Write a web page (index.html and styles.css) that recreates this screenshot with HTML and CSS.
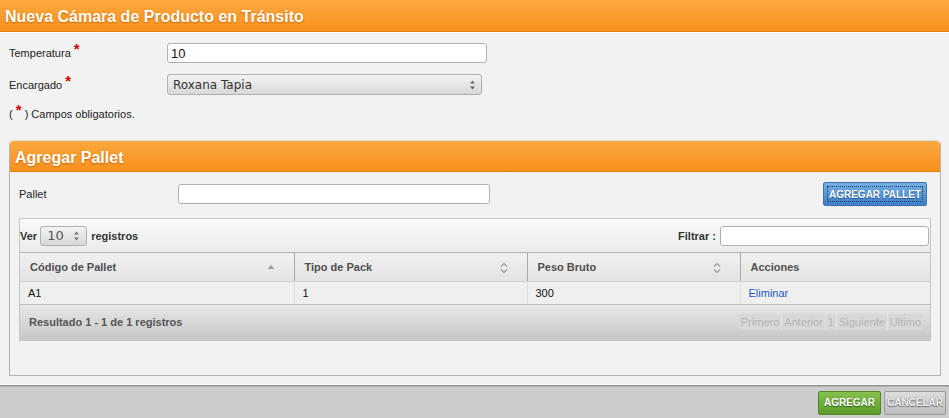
FILE: index.html
```html
<!DOCTYPE html>
<html lang="es">
<head>
<meta charset="utf-8">
<title>Nueva Cámara de Producto en Tránsito</title>
<link rel="stylesheet" href="styles.css">
</head>
<body>
<header class="top-bar"><h1>Nueva Cámara de Producto en Tránsito</h1></header>
<main class="content">
  <div class="fields">
    <label class="lbl">Temperatura <span class="req">*</span></label>
    <input class="text-input temp" type="text" value="10">
    <label class="lbl">Encargado <span class="req">*</span></label>
    <div class="select-box big">
      <span class="select-text">Roxana Tapia</span>
      <svg class="sel-arrows" width="7" height="10" viewBox="0 0 7 10"><path d="M1 3.5 L3.5 0.5 L6 3.5Z M1 6.5 L3.5 9.5 L6 6.5Z" fill="#666"/></svg>
    </div>
  </div>
  <p class="note">( <span class="req">*</span> ) Campos obligatorios.</p>

  <section class="panel">
    <div class="panel-head"><h2>Agregar Pallet</h2></div>
    <div class="panel-body">
      <div class="pallet-row">
        <label class="lbl">Pallet</label>
        <input class="text-input pallet" type="text">
        <button class="btn-blue" type="button">AGREGAR PALLET</button>
      </div>
      <div class="table-wrap">
        <div class="toolbar">
          <div class="length">Ver
            <div class="select-box small">
              <span class="select-text">10</span>
              <svg class="sel-arrows" width="7" height="10" viewBox="0 0 7 10"><path d="M1 3.5 L3.5 0.5 L6 3.5Z M1 6.5 L3.5 9.5 L6 6.5Z" fill="#777"/></svg>
            </div>
            registros</div>
          <div class="filter">Filtrar : <input class="text-input filter-input" type="text"></div>
        </div>
        <table class="grid">
          <colgroup><col class="c1"><col class="c2"><col class="c3"><col class="c4"></colgroup>
          <thead>
            <tr>
              <th>Código de Pallet<svg class="sort" width="8" height="12" viewBox="0 0 8 12"><path d="M0.5 7 L4 3 L7.5 7Z" fill="#9a9a9a"/></svg></th>
              <th>Tipo de Pack<svg class="sort" width="8" height="12" viewBox="0 0 8 12"><path d="M1 4.5 L4 1.5 L7 4.5 M1 7.5 L4 10.5 L7 7.5" fill="none" stroke="#9a9a9a" stroke-width="1.2"/></svg></th>
              <th>Peso Bruto<svg class="sort" width="8" height="12" viewBox="0 0 8 12"><path d="M1 4.5 L4 1.5 L7 4.5 M1 7.5 L4 10.5 L7 7.5" fill="none" stroke="#9a9a9a" stroke-width="1.2"/></svg></th>
              <th>Acciones</th>
            </tr>
          </thead>
          <tbody>
            <tr><td>A1</td><td>1</td><td>300</td><td><a href="#" class="link">Eliminar</a></td></tr>
          </tbody>
        </table>
        <div class="tfoot">
          <span class="info">Resultado 1 - 1 de 1 registros</span>
          <div class="paging"><span>Primero</span><span>Anterior</span><span>1</span><span>Siguiente</span><span>Ultimo</span></div>
        </div>
      </div>
    </div>
  </section>
</main>
<footer class="bottom-bar">
  <button class="btn-green" type="button">AGREGAR</button>
  <button class="btn-gray" type="button">CANCELAR</button>
</footer>
</body>
</html>
```
FILE: styles.css
```css
* { box-sizing: border-box; }
html, body { margin: 0; }
body {
  background: #f2f2f2;
  font-family: "Liberation Sans", Arial, sans-serif;
  font-size: 11px;
  color: #222;
  width: 949px;
  height: 418px;
  overflow: hidden;
}
.top-bar {
  height: 32px;
  background: linear-gradient(#fda83f, #f8911d);
  border-bottom: 1px solid #e2810f;
  box-shadow: 0 1px 0 #fbfbfb;
  padding: 3px 0 0 5px;
  display: flex;
  align-items: center;
}
.top-bar h1 {
  margin: 0;
  font-size: 16px;
  font-weight: bold;
  color: #fff;
  text-shadow: 0 1px 2px #c4680c;
}
.content { padding: 0 8px 0 9px; }
.fields {
  display: grid;
  grid-template-columns: 158px auto;
  row-gap: 11px;
  padding-top: 11px;
  align-items: center;
  justify-items: start;
}
.lbl { color: #222; font-size: 11px; }
.req { color: #d40000; font-weight: bold; font-size: 15px; position: relative; top: -3px; line-height: 10px; }
.text-input {
  height: 20px;
  border: 1px solid #b0b0b0;
  border-radius: 3px;
  background: #fff;
  font-family: "Liberation Sans", Arial, sans-serif;
  font-size: 13px;
  padding: 0 3px;
  color: #111;
}
.temp { width: 320px; }
.select-box {
  display: flex;
  align-items: center;
  justify-content: space-between;
  border: 1px solid #b0b0b0;
  border-radius: 3px;
  background: linear-gradient(#f3f3f3, #d9d9d9);
  color: #333;
}
.select-box.big { width: 315px; height: 21px; padding: 0 5px 0 5px; font-family: "DejaVu Sans", sans-serif; font-size: 12px; }
.select-box.small { width: 47px; height: 20px; padding: 0 6px 0 6px; font-family: "DejaVu Sans", sans-serif; font-size: 13px; font-weight: normal; color: #555; margin: 0 4px 0 3px; }
.note { margin: 12px 0 0; line-height: 14px; }
.panel {
  margin-top: 19px;
  border: 1px solid #b4b4b4;
  border-top-color: #ddd;
  border-radius: 5px 5px 0 0;
  overflow: hidden;
}
.panel-head {
  height: 31px;
  background: linear-gradient(#fda83f, #f8911d);
  border-bottom: 1px solid #e2810f;
  padding: 3px 0 0 5px;
  display: flex;
  align-items: center;
}
.panel-head h2 {
  margin: 0;
  font-size: 16px;
  font-weight: bold;
  color: #fff;
  text-shadow: 0 1px 2px #c4680c;
}
.panel-body { padding: 10px 9px 34px; }
.pallet-row {
  display: flex;
  align-items: center;
  height: 24px;
}
.pallet-row .lbl { width: 159px; }
.pallet { width: 312px; }
.btn-blue {
  margin-left: auto;
  margin-right: 4px;
  width: 104px;
  height: 24px;
  border: 1px solid #3f74b3;
  border-radius: 2px;
  background: linear-gradient(#76b1e6, #3d7ec6);
  color: #fff;
  font-family: "Liberation Sans", Arial, sans-serif;
  font-size: 10px;
  font-weight: bold;
  text-shadow: 0 1px 1px #1f4d80;
  outline: 1px dotted #233e60;
  outline-offset: -5px;
  padding: 0;
}
.table-wrap {
  margin-top: 12px;
  border: 1px solid #c6c6c6;
}
.toolbar {
  height: 33px;
  background: linear-gradient(#fafafa, #ebebeb);
  display: flex;
  align-items: center;
  justify-content: space-between;
  padding: 0 1px 0 0;
  font-weight: bold;
  color: #333;
}
.length { display: flex; align-items: center; }
.filter { display: flex; align-items: center; }
.filter-input { width: 209px; margin-left: 4px; }
.grid {
  width: 100%;
  border-collapse: collapse;
  table-layout: fixed;
}
.c1 { width: 274px; }
.c2 { width: 233px; }
.c3 { width: 213px; }
.c4 { width: 190px; }
.grid th {
  height: 29px;
  text-align: left;
  padding: 0 19px 0 10px;
  font-weight: bold;
  color: #4f4f4f;
  background: linear-gradient(#f1f1f1, #e3e3e3);
  border-top: 1px solid #b8b8b8;
  border-bottom: 1px solid #d0d0d0;
  border-left: 1px solid #a8a8a8;
}
.grid th:first-child, .grid td:first-child { border-left: none; }
.sort { float: right; margin-top: 1px; }
.grid td {
  height: 22px;
  padding: 0 8px;
  background: #efefef;
  color: #111;
  border-left: 1px solid #dedede;
}
.link { color: #2358c2; text-decoration: none; }
.tfoot {
  height: 36px;
  border-top: 1px solid #bcbcbc;
  background: linear-gradient(#e7e7e7, #c7c7c7);
  display: flex;
  align-items: center;
  justify-content: space-between;
  padding: 0 7px 0 9px;
}
.info { font-weight: bold; color: #555; }
.paging { display: flex; }
.paging span {
  padding: 2px 2px;
  color: #b5b5b5;
  background: #d8d8d8;
  border-left: 1px solid #e4e4e4;
}
.paging span:first-child { border-left: none; }
.bottom-bar {
  margin-top: 8px;
  height: 34px;
  border-top: 1px solid #fafafa;
  box-shadow: inset 0 1px 0 #8f8f8f, inset 0 2px 0 #b5b5b5;
  background: #cccccc;
  display: flex;
  justify-content: flex-end;
  align-items: flex-start;
  padding: 6px 3px 0 0;
  gap: 3px;
}
.btn-green, .btn-gray {
  height: 24px;
  border-radius: 2px;
  font-family: "Liberation Sans", Arial, sans-serif;
  font-size: 10px;
  font-weight: bold;
  padding: 0;
}
.btn-green {
  width: 63px;
  border: 1px solid #4d8a22;
  background: linear-gradient(#86c04f, #5c9b2b);
  color: #fff;
  text-shadow: 0 1px 1px #2f5c12;
}
.btn-gray {
  width: 62px;
  border: 1px solid #999;
  background: linear-gradient(#dedede, #bcbcbc);
  color: #fafafa;
  text-shadow: 0 0 1px #555, 0 1px 1px #666;
}
```
